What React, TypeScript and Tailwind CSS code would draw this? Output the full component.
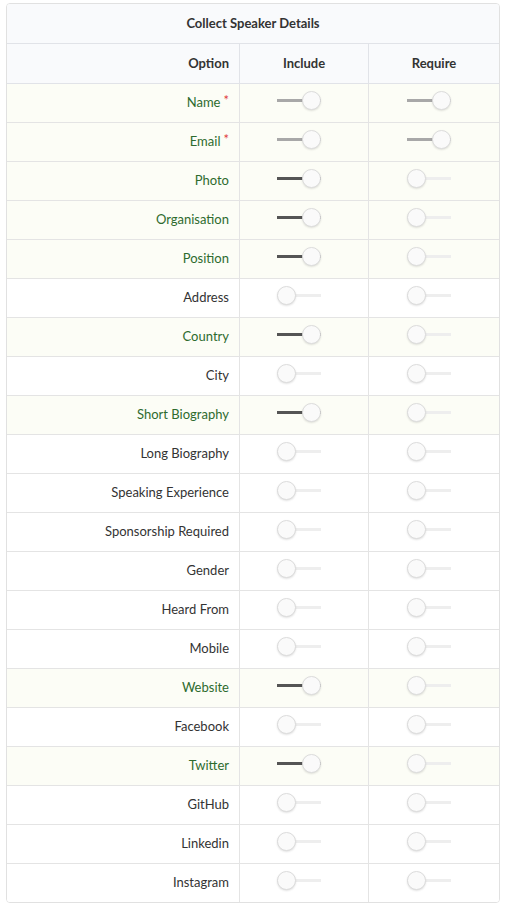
import React from 'react';

type Field = {
  label: string;
  include: boolean;
  require: boolean;
  locked?: boolean;
};

const fields: Field[] = [
  { label: 'Name', include: true, require: true, locked: true },
  { label: 'Email', include: true, require: true, locked: true },
  { label: 'Photo', include: true, require: false },
  { label: 'Organisation', include: true, require: false },
  { label: 'Position', include: true, require: false },
  { label: 'Address', include: false, require: false },
  { label: 'Country', include: true, require: false },
  { label: 'City', include: false, require: false },
  { label: 'Short Biography', include: true, require: false },
  { label: 'Long Biography', include: false, require: false },
  { label: 'Speaking Experience', include: false, require: false },
  { label: 'Sponsorship Required', include: false, require: false },
  { label: 'Gender', include: false, require: false },
  { label: 'Heard From', include: false, require: false },
  { label: 'Mobile', include: false, require: false },
  { label: 'Website', include: true, require: false },
  { label: 'Facebook', include: false, require: false },
  { label: 'Twitter', include: true, require: false },
  { label: 'GitHub', include: false, require: false },
  { label: 'Linkedin', include: false, require: false },
  { label: 'Instagram', include: false, require: false },
];

// slim material-ish switch: thin track, big round knob
const Toggle: React.FC<{ on: boolean; disabled?: boolean }> = ({ on, disabled }) => {
  const track = on ? (disabled ? 'bg-[#a8a8a8]' : 'bg-[#555555]') : 'bg-[#eeeeee]';
  return (
    <div className="relative w-[44px] h-[19px] mb-[6px] mr-[11px]">
      <div className={`absolute left-0 right-0 top-[8px] h-[3px] ${track}`} />
      <div
        className={`absolute top-0 w-[19px] h-[19px] rounded-full bg-[#fafafa] border border-[#dcdcdc] shadow-[0_1px_2px_rgba(0,0,0,0.12)] ${
          on ? 'right-0' : 'left-0'
        }`}
      />
    </div>
  );
};

export default function App() {
  return (
    <div className="min-h-[911px] bg-white pt-[3px] pl-[6px]" style={{ fontFamily: 'Lato, "Open Sans", sans-serif' }}>
      <div className="w-[494px] rounded-[4px] border border-[#e1e1e1] overflow-hidden text-[13px] text-[#333333]">
        <div className="h-[40px] flex items-center justify-center bg-[#f9fafc] border-b border-[#e1e3e8] font-bold">
          Collect Speaker Details
        </div>
        <div className="grid grid-cols-[233px_129px_1fr] h-[40px] bg-[#f9fafc] border-b border-[#e1e3e8] font-bold">
          <div className="flex items-center justify-end pr-[10px] border-r border-[#e1e3e8]">Option</div>
          <div className="flex items-center justify-center border-r border-[#e1e3e8]">Include</div>
          <div className="flex items-center justify-center">Require</div>
        </div>
        {fields.map((f, i) => {
          const last = i === fields.length - 1;
          return (
            <div
              key={f.label}
              className={`grid grid-cols-[233px_129px_1fr] ${last ? 'h-[38px]' : 'h-[39px] border-b border-[#e4e4e4]'} ${
                f.include ? 'bg-[#fcfdf6] text-[#2e6b2e]' : 'bg-white'
              }`}
            >
              <div className="flex items-center justify-end pr-[10px] border-r border-[#e4e4e4]">
                {f.label}
                {f.locked && <span className="text-[#e03c3c] text-[13px] leading-none ml-[3px] -mt-[5px]">*</span>}
              </div>
              <div className="flex items-center justify-center border-r border-[#e4e4e4]">
                <Toggle on={f.include} disabled={f.locked} />
              </div>
              <div className="flex items-center justify-center">
                <Toggle on={f.require} disabled={f.locked} />
              </div>
            </div>
          );
        })}
      </div>
    </div>
  );
}
